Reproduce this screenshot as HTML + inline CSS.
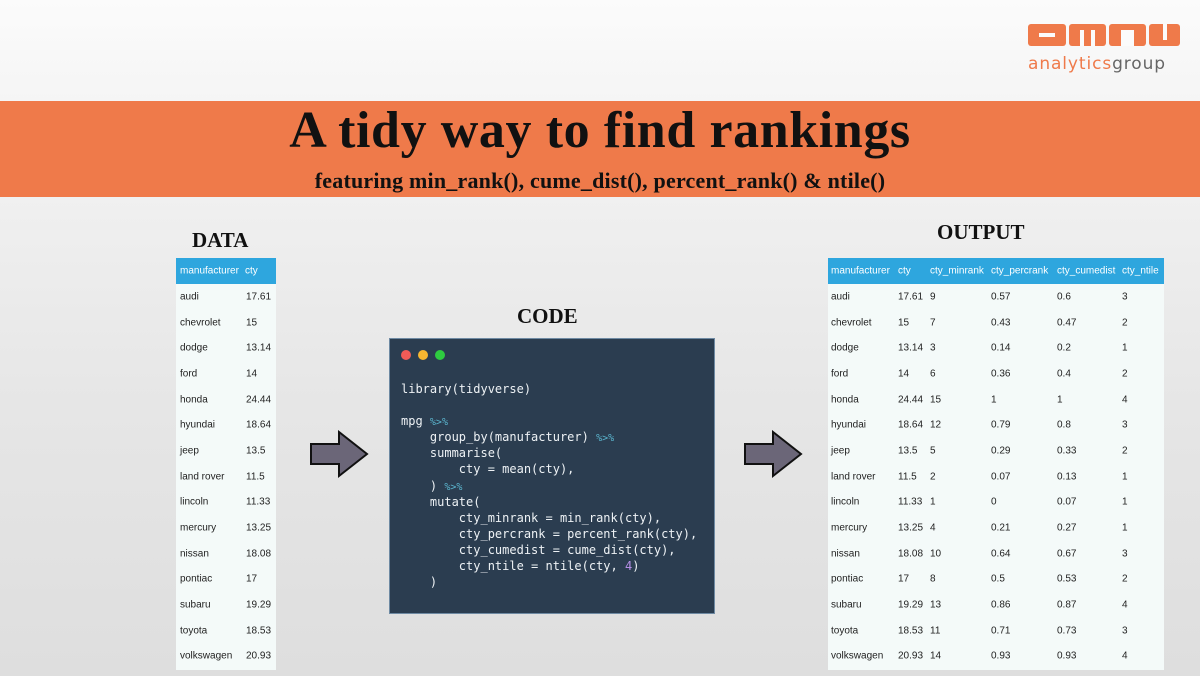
<!DOCTYPE html>
<html><head><meta charset="utf-8"><style>
*{margin:0;padding:0;box-sizing:border-box}
body{width:1200px;height:676px;overflow:hidden;position:relative;background:linear-gradient(#fbfbfb 0%,#f1f1f1 25%,#e6e6e6 60%,#dedede 100%);font-family:"Liberation Sans",sans-serif}
.band{position:absolute;left:0;top:101px;width:1200px;height:96px;background:#ef7a4a}
.title{position:absolute;left:0;width:1200px;text-align:center;top:101px;font-family:"Liberation Serif",serif;font-weight:bold;font-size:52px;letter-spacing:0.6px;color:#111}
.sub{position:absolute;left:0;width:1200px;text-align:center;top:168px;font-family:"Liberation Serif",serif;font-weight:bold;font-size:22px;letter-spacing:0.2px;color:#111}
.lbl{position:absolute;font-family:"Liberation Serif",serif;font-weight:bold;font-size:21px;color:#111}
.tbl{position:absolute;background:#f4faf9}
.tbl .h{height:26px;background:#2ea6de;color:#fff;position:relative}
.tbl .r{height:25.7px;position:relative;color:#222}
.tbl span{position:absolute;top:50%;transform:translateY(-50%);font-size:10px;white-space:nowrap}
.code{position:absolute;left:389px;top:338px;width:326px;height:276px;background:#2b3d50;border:1px solid #6e8aa3}
.dot{position:absolute;top:11px;width:10px;height:10px;border-radius:50%}
pre{position:absolute;left:11px;top:42px;font-family:"DejaVu Sans Mono",monospace;font-size:12px;line-height:16.1px;color:#eef2f5}
.op{color:#5bb6cf;font-size:10px;line-height:0;vertical-align:baseline}
.n{color:#b58ee6}
</style></head><body>
<svg style="position:absolute;left:1028px;top:24px" width="154" height="50" viewBox="0 0 154 50">
<g fill="#ef7a4a">
<rect x="0" y="0" width="38" height="22" rx="3"/>
<rect x="41" y="0" width="37" height="22" rx="3"/>
<rect x="81" y="0" width="37" height="22" rx="3"/>
<rect x="121" y="0" width="31" height="22" rx="3"/>
</g>
<g fill="#fbfbfb">
<rect x="11" y="9" width="16" height="4"/>
<rect x="52" y="6" width="4" height="16"/><rect x="63" y="6" width="4" height="16"/>
<rect x="93" y="6" width="13" height="16"/>
<rect x="135" y="0" width="4" height="16"/>
</g>
<text x="0" y="45" font-family="DejaVu Sans,sans-serif" font-size="17" fill="#ef7a4a" letter-spacing="0.9">analytics<tspan fill="#666">group</tspan></text>
</svg>
<div class="band"></div>
<div class="title">A tidy way to find rankings</div>
<div class="sub">featuring min_rank(), cume_dist(), percent_rank() &amp; ntile()</div>

<div class="lbl" style="left:192px;top:228px">DATA</div>
<div class="lbl" style="left:517px;top:304px">CODE</div>
<div class="lbl" style="left:937px;top:220px">OUTPUT</div>

<div class="tbl" style="left:176px;top:258px;width:100px;height:412px">
<div class="h"><span style="left:4px">manufacturer</span><span style="left:69px">cty</span></div>
<div class="r"><span style="left:4px">audi</span><span style="left:70px">17.61</span></div>
<div class="r"><span style="left:4px">chevrolet</span><span style="left:70px">15</span></div>
<div class="r"><span style="left:4px">dodge</span><span style="left:70px">13.14</span></div>
<div class="r"><span style="left:4px">ford</span><span style="left:70px">14</span></div>
<div class="r"><span style="left:4px">honda</span><span style="left:70px">24.44</span></div>
<div class="r"><span style="left:4px">hyundai</span><span style="left:70px">18.64</span></div>
<div class="r"><span style="left:4px">jeep</span><span style="left:70px">13.5</span></div>
<div class="r"><span style="left:4px">land rover</span><span style="left:70px">11.5</span></div>
<div class="r"><span style="left:4px">lincoln</span><span style="left:70px">11.33</span></div>
<div class="r"><span style="left:4px">mercury</span><span style="left:70px">13.25</span></div>
<div class="r"><span style="left:4px">nissan</span><span style="left:70px">18.08</span></div>
<div class="r"><span style="left:4px">pontiac</span><span style="left:70px">17</span></div>
<div class="r"><span style="left:4px">subaru</span><span style="left:70px">19.29</span></div>
<div class="r"><span style="left:4px">toyota</span><span style="left:70px">18.53</span></div>
<div class="r"><span style="left:4px">volkswagen</span><span style="left:70px">20.93</span></div>
</div>

<svg style="position:absolute;left:309px;top:430px" width="62" height="50"><polygon points="2,14 30,14 30,2 58,24 30,46 30,34 2,34" fill="#6b6678" stroke="#111" stroke-width="2"/></svg>
<svg style="position:absolute;left:743px;top:430px" width="62" height="50"><polygon points="2,14 30,14 30,2 58,24 30,46 30,34 2,34" fill="#6b6678" stroke="#111" stroke-width="2"/></svg>

<div class="code">
<div class="dot" style="left:11px;background:#f25b57"></div>
<div class="dot" style="left:28px;background:#f7b731"></div>
<div class="dot" style="left:45px;background:#2ecc40"></div>
<pre>library(tidyverse)

mpg <span class="op">%&gt;%</span>
    group_by(manufacturer) <span class="op">%&gt;%</span>
    summarise(
        cty = mean(cty),
    ) <span class="op">%&gt;%</span>
    mutate(
        cty_minrank = min_rank(cty),
        cty_percrank = percent_rank(cty),
        cty_cumedist = cume_dist(cty),
        cty_ntile = ntile(cty, <span class="n">4</span>)
    )</pre>
</div>

<div class="tbl" style="left:828px;top:258px;width:336px;height:412px">
<div class="h"><span style="left:3px">manufacturer</span><span style="left:70px">cty</span><span style="left:102px">cty_minrank</span><span style="left:163px">cty_percrank</span><span style="left:229px">cty_cumedist</span><span style="left:294px">cty_ntile</span></div>
<div class="r"><span style="left:3px">audi</span><span style="left:70px">17.61</span><span style="left:102px">9</span><span style="left:163px">0.57</span><span style="left:229px">0.6</span><span style="left:294px">3</span></div>
<div class="r"><span style="left:3px">chevrolet</span><span style="left:70px">15</span><span style="left:102px">7</span><span style="left:163px">0.43</span><span style="left:229px">0.47</span><span style="left:294px">2</span></div>
<div class="r"><span style="left:3px">dodge</span><span style="left:70px">13.14</span><span style="left:102px">3</span><span style="left:163px">0.14</span><span style="left:229px">0.2</span><span style="left:294px">1</span></div>
<div class="r"><span style="left:3px">ford</span><span style="left:70px">14</span><span style="left:102px">6</span><span style="left:163px">0.36</span><span style="left:229px">0.4</span><span style="left:294px">2</span></div>
<div class="r"><span style="left:3px">honda</span><span style="left:70px">24.44</span><span style="left:102px">15</span><span style="left:163px">1</span><span style="left:229px">1</span><span style="left:294px">4</span></div>
<div class="r"><span style="left:3px">hyundai</span><span style="left:70px">18.64</span><span style="left:102px">12</span><span style="left:163px">0.79</span><span style="left:229px">0.8</span><span style="left:294px">3</span></div>
<div class="r"><span style="left:3px">jeep</span><span style="left:70px">13.5</span><span style="left:102px">5</span><span style="left:163px">0.29</span><span style="left:229px">0.33</span><span style="left:294px">2</span></div>
<div class="r"><span style="left:3px">land rover</span><span style="left:70px">11.5</span><span style="left:102px">2</span><span style="left:163px">0.07</span><span style="left:229px">0.13</span><span style="left:294px">1</span></div>
<div class="r"><span style="left:3px">lincoln</span><span style="left:70px">11.33</span><span style="left:102px">1</span><span style="left:163px">0</span><span style="left:229px">0.07</span><span style="left:294px">1</span></div>
<div class="r"><span style="left:3px">mercury</span><span style="left:70px">13.25</span><span style="left:102px">4</span><span style="left:163px">0.21</span><span style="left:229px">0.27</span><span style="left:294px">1</span></div>
<div class="r"><span style="left:3px">nissan</span><span style="left:70px">18.08</span><span style="left:102px">10</span><span style="left:163px">0.64</span><span style="left:229px">0.67</span><span style="left:294px">3</span></div>
<div class="r"><span style="left:3px">pontiac</span><span style="left:70px">17</span><span style="left:102px">8</span><span style="left:163px">0.5</span><span style="left:229px">0.53</span><span style="left:294px">2</span></div>
<div class="r"><span style="left:3px">subaru</span><span style="left:70px">19.29</span><span style="left:102px">13</span><span style="left:163px">0.86</span><span style="left:229px">0.87</span><span style="left:294px">4</span></div>
<div class="r"><span style="left:3px">toyota</span><span style="left:70px">18.53</span><span style="left:102px">11</span><span style="left:163px">0.71</span><span style="left:229px">0.73</span><span style="left:294px">3</span></div>
<div class="r"><span style="left:3px">volkswagen</span><span style="left:70px">20.93</span><span style="left:102px">14</span><span style="left:163px">0.93</span><span style="left:229px">0.93</span><span style="left:294px">4</span></div>
</div>
</body></html>
